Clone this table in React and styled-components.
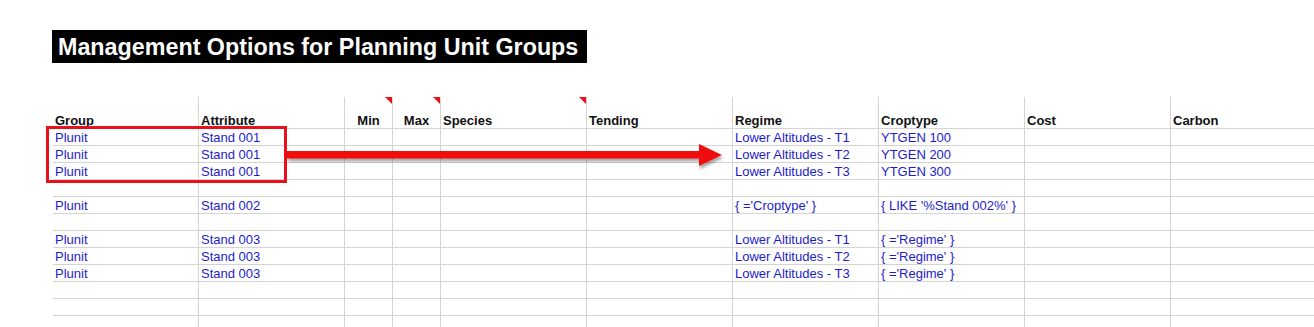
import React from "react";
import styled, { createGlobalStyle } from "styled-components";

const Global = createGlobalStyle`
  html, body {
    margin: 0;
    padding: 0;
    background: #ffffff;
    overflow: hidden;
  }
  body {
    font-family: "Liberation Sans", Arial, sans-serif;
  }
`;

const Page = styled.div`
  position: relative;
  width: 1314px;
  height: 327px;
  padding: 30px 0 0 52px;
  box-sizing: border-box;
  overflow: hidden;
`;

const Title = styled.div`
  width: 535px;
  height: 33px;
  box-sizing: border-box;
  padding: 2px 0 0 6px;
  background: #000;
  color: #fff;
  font-weight: bold;
  font-size: 23.3px;
  line-height: 31px;
  white-space: nowrap;
`;

const Grid = styled.div`
  display: grid;
  grid-template-columns: 146px 146px 48px 48px 146px 146px 146px 146px 146px 144px;
  margin: 34px 0 0 1px;
  font-size: 13px;
`;

const Cell = styled.div`
  position: relative;
  box-sizing: border-box;
  height: ${(p) => (p.$head ? 32 : 17)}px;
  border-right: 1px solid #d4d4d4;
  border-bottom: 1px solid #d4d4d4;
  padding: ${(p) => (p.$head ? "0 2px" : "1px 2px 0")};
  white-space: nowrap;
  overflow: visible;
  display: flex;
  align-items: ${(p) => (p.$head ? "flex-end" : "flex-start")};
  justify-content: ${(p) => (p.$center ? "center" : "flex-start")};
  line-height: ${(p) => (p.$head ? 14 : 15)}px;
  font-weight: ${(p) => (p.$head ? "bold" : "normal")};
  color: ${(p) => (p.$head ? "#111" : "#1c1ccc")};
`;

const CommentMark = styled.span`
  position: absolute;
  top: 0;
  right: 0;
  width: 0;
  height: 0;
  border-top: 7px solid #e8101a;
  border-left: 7px solid transparent;
`;

const Highlight = styled.div`
  position: absolute;
  left: 46px;
  top: 126px;
  width: 241px;
  height: 57px;
  box-sizing: border-box;
  border: 3px solid #e8101a;
`;

const Arrow = styled.svg`
  position: absolute;
  left: 285px;
  top: 140px;
  overflow: visible;
`;

const headers = [
  { t: "Group" },
  { t: "Attribute" },
  { t: "Min", c: true, mark: true },
  { t: "Max", c: true, mark: true },
  { t: "Species", mark: true },
  { t: "Tending" },
  { t: "Regime" },
  { t: "Croptype" },
  { t: "Cost" },
  { t: "Carbon" },
];

const rows = [
  ["Plunit", "Stand 001", "Lower Altitudes - T1", "YTGEN 100"],
  ["Plunit", "Stand 001", "Lower Altitudes - T2", "YTGEN 200"],
  ["Plunit", "Stand 001", "Lower Altitudes - T3", "YTGEN 300"],
  null,
  ["Plunit", "Stand 002", "{ ='Croptype' }", "{ LIKE '%Stand 002%' }"],
  null,
  ["Plunit", "Stand 003", "Lower Altitudes - T1", "{ ='Regime' }"],
  ["Plunit", "Stand 003", "Lower Altitudes - T2", "{ ='Regime' }"],
  ["Plunit", "Stand 003", "Lower Altitudes - T3", "{ ='Regime' }"],
  null,
  null,
  null,
];

function rowCells(r) {
  if (!r) return ["", "", "", "", "", "", "", "", "", ""];
  return [r[0], r[1], "", "", "", "", r[2], r[3], "", ""];
}

export default function App() {
  return (
    <>
      <Global />
      <Page>
        <Title>Management Options for Planning Unit Groups</Title>
        <Grid>
          {headers.map((h, i) => (
            <Cell key={"h" + i} $head $center={h.c}>
              {h.t}
              {h.mark && <CommentMark />}
            </Cell>
          ))}
          {rows.map((r, ri) =>
            rowCells(r).map((v, ci) => (
              <Cell key={ri + "-" + ci} $center={ci === 2 || ci === 3}>
                {v}
              </Cell>
            ))
          )}
        </Grid>
        <Highlight />
        <Arrow width="442" height="32" viewBox="0 0 442 32">
          <defs>
            <filter id="sh" x="-5%" y="-50%" width="110%" height="200%">
              <feDropShadow dx="1" dy="3" stdDeviation="1.4" floodColor="#000" floodOpacity="0.35" />
            </filter>
          </defs>
          <path
            d="M2 11 H414 V4 L437 15 L414 26 V18.5 H2 Z"
            fill="#f00a0a"
            filter="url(#sh)"
          />
        </Arrow>
      </Page>
    </>
  );
}
